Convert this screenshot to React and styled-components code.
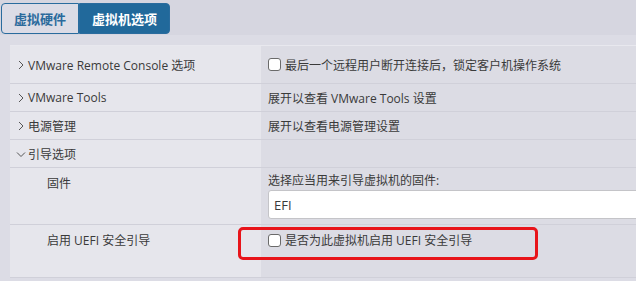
import React from 'react'
import styled, { createGlobalStyle } from 'styled-components'

const Global = createGlobalStyle`
  html, body { margin: 0; padding: 0; }
  body {
    background: #dcdce5;
    font-family: "Open Sans", "Noto Sans CJK SC", sans-serif;
    font-size: 12px;
    color: #3a3a3a;
    overflow: hidden;
  }
`

const Page = styled.div`
  width: 636px;
  height: 281px;
  overflow: hidden;
`

const TabBar = styled.div`
  display: flex;
  padding: 3px 0 0 1px;
  height: 32px;
  background: #d6d6e0;
`

const Tab = styled.div`
  display: flex;
  align-items: center;
  height: 31px;
  box-sizing: border-box;
  padding: 0 12px;
  font-weight: 700;
  font-size: 13px;
  border: 1px solid #2a6c9e;
  color: ${p => (p.$active ? '#fff' : '#2b6a9c')};
  background: ${p => (p.$active ? '#21699b' : '#dcdce6')};
  border-radius: ${p => (p.$active ? '0 4px 4px 0' : '4px 0 0 4px')};
`

const Body = styled.div`
  padding: 10px 0 0 10px;
  background: #dcdce5;
`

const Table = styled.div`
  display: grid;
  grid-template-columns: 251px 1fr;
  border-top: 1px solid #e8e8ee;
`

const Left = styled.div`
  background: #e6e6ec;
  border-bottom: 1px solid #d0d0d9;
  height: ${p => p.$h}px;
  box-sizing: border-box;
  display: flex;
  align-items: ${p => (p.$top ? 'flex-start' : 'center')};
  padding: ${p => (p.$top ? '6px 0 0' : '0')} ${p => (p.$indent ? '37px' : '6px')};
`

const Right = styled.div`
  position: relative;
  background: #dcdce4;
  border-bottom: 1px solid #d0d0d9;
  height: ${p => p.$h}px;
  box-sizing: border-box;
  display: flex;
  flex-direction: column;
  justify-content: ${p => (p.$top ? 'flex-start' : 'center')};
  padding: ${p => (p.$top ? `${p.$top}px` : '0')} 0 0 7px;
`

const Chevron = styled.svg`
  width: 10px;
  height: 10px;
  margin-right: 2px;
  flex-shrink: 0;
`

const CheckRow = styled.label`
  display: flex;
  align-items: center;
  gap: 4px;
`

const Box = styled.span`
  width: 11px;
  height: 11px;
  border: 1px solid #6a6a6a;
  border-radius: 3px;
  background: #fff;
`

const FieldLabel = styled.div`
  line-height: 15px;
`

const Input = styled.div`
  margin-top: 2px;
  width: 400px;
  height: 29px;
  box-sizing: border-box;
  background: #fff;
  border: 1px solid #c4c4c8;
  border-radius: 3px;
  display: flex;
  align-items: center;
  padding-left: 5px;
  font-size: 13px;
`

const Highlight = styled.div`
  position: absolute;
  left: -23px;
  top: 2px;
  width: 300px;
  height: 33px;
  box-sizing: border-box;
  border: 3px solid #e8141a;
  border-radius: 5px;
`

const Arrow = ({ down }) => (
  <Chevron viewBox="0 0 10 10">
    <path
      d={down ? 'M1 3.5 L5 7.5 L9 3.5' : 'M3 1 L7 5 L3 9'}
      fill="none"
      stroke="#555"
      strokeWidth="1"
    />
  </Chevron>
)

export default function App() {
  return (
    <Page>
      <Global />
      <TabBar>
        <Tab>虚拟硬件</Tab>
        <Tab $active>虚拟机选项</Tab>
      </TabBar>
      <Body>
        <Table>
          <Left $h={38}><Arrow />VMware Remote Console 选项</Left>
          <Right $h={38}>
            <CheckRow><Box />最后一个远程用户断开连接后，锁定客户机操作系统</CheckRow>
          </Right>

          <Left $h={28}><Arrow />VMware Tools</Left>
          <Right $h={28}>展开以查看 VMware Tools 设置</Right>

          <Left $h={28}><Arrow />电源管理</Left>
          <Right $h={28}>展开以查看电源管理设置</Right>

          <Left $h={28}><Arrow down />引导选项</Left>
          <Right $h={28} />

          <Left $h={57} $top $indent>固件</Left>
          <Right $h={57} $top={5}>
            <FieldLabel>选择应当用来引导虚拟机的固件:</FieldLabel>
            <Input>EFI</Input>
          </Right>

          <Left $h={53} $top $indent>启用 UEFI 安全引导</Left>
          <Right $h={53} $top={6}>
            <CheckRow><Box />是否为此虚拟机启用 UEFI 安全引导</CheckRow>
            <Highlight />
          </Right>
        </Table>
      </Body>
    </Page>
  )
}
